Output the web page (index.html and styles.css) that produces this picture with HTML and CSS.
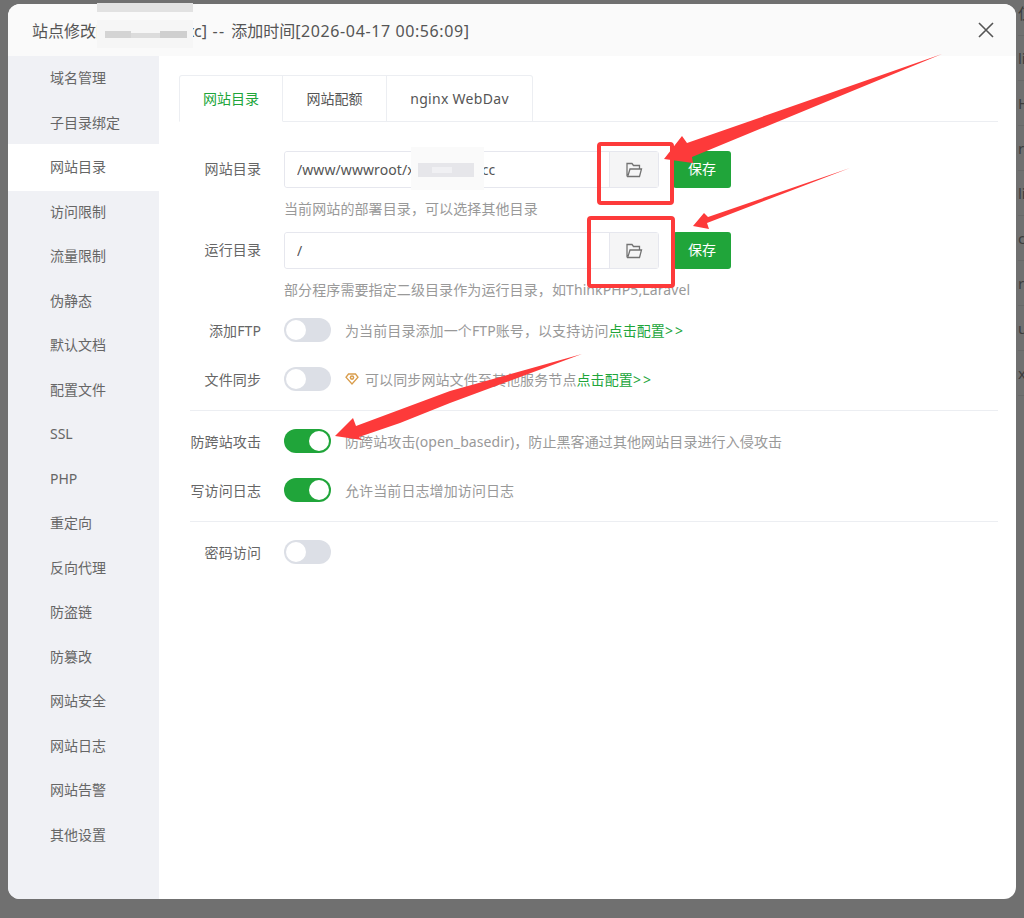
FILE: index.html
```html
<!DOCTYPE html>
<html lang="zh-CN">
<head>
  <meta charset="UTF-8">
  <title>站点修改</title>
  <link rel="stylesheet" href="styles.css">
</head>
<body>
  <!-- page behind the dialog, only a sliver shows on the right -->
  <div class="backdrop">
    <div class="backdrop-row">仅</div>
    <div class="backdrop-row">li</div>
    <div class="backdrop-row">H</div>
    <div class="backdrop-row">r</div>
    <div class="backdrop-row">li</div>
    <div class="backdrop-row">c</div>
    <div class="backdrop-row">r</div>
    <div class="backdrop-row">u</div>
    <div class="backdrop-row">x</div>
  </div>

  <div class="modal">
    <header class="modal-head">
      <span class="modal-title">站点修改[xxxxxxxxxxxc]<span class="title-sep"> -- </span>添加时间<span class="title-date">[2026-04-17 00:56:09]</span></span>
      <svg class="modal-close" width="16" height="16" viewBox="0 0 16 16"><path d="M1 1 15 15M15 1 1 15" stroke="#555" stroke-width="1.6" fill="none"/></svg>
    </header>
    <div class="modal-body">
      <nav class="side">
        <a class="side-item">域名管理</a>
        <a class="side-item">子目录绑定</a>
        <a class="side-item active">网站目录</a>
        <a class="side-item">访问限制</a>
        <a class="side-item">流量限制</a>
        <a class="side-item">伪静态</a>
        <a class="side-item">默认文档</a>
        <a class="side-item">配置文件</a>
        <a class="side-item">SSL</a>
        <a class="side-item">PHP</a>
        <a class="side-item">重定向</a>
        <a class="side-item">反向代理</a>
        <a class="side-item">防盗链</a>
        <a class="side-item">防篡改</a>
        <a class="side-item">网站安全</a>
        <a class="side-item">网站日志</a>
        <a class="side-item">网站告警</a>
        <a class="side-item">其他设置</a>
      </nav>
      <main class="content">
        <div class="tabs">
          <div class="tab tab-active">网站目录</div>
          <div class="tab tab-second">网站配额</div>
          <div class="tab tab-third">nginx WebDav</div>
        </div>

        <div class="form">
          <div class="path-row">
            <label class="row-label">网站目录</label>
            <div class="path-group">
              <input class="path-input" value="/www/wwwroot/xxxxxxxxxxcc">
              <button class="path-btn">
                <svg width="18" height="16" viewBox="0 0 18 16"><path d="M2 14.500V1.500h5l1.500 2h6V7M2 14.500h12.500l2-7.500H5L3 13.500" fill="none" stroke="#737373" stroke-width="1.300"/></svg>
              </button>
            </div>
            <button class="save-btn">保存</button>
          </div>
          <p class="help">当前网站的部署目录，可以选择其他目录</p>

          <div class="path-row">
            <label class="row-label">运行目录</label>
            <div class="path-group">
              <input class="path-input" value="/">
              <button class="path-btn">
                <svg width="18" height="16" viewBox="0 0 18 16"><path d="M2 14.500V1.500h5l1.500 2h6V7M2 14.500h12.500l2-7.500H5L3 13.500" fill="none" stroke="#737373" stroke-width="1.300"/></svg>
              </button>
            </div>
            <button class="save-btn">保存</button>
          </div>
          <p class="help">部分程序需要指定二级目录作为运行目录，如ThinkPHP5,Laravel</p>

          <div class="switch-row row-ftp">
            <label class="row-label">添加FTP</label>
            <span class="switch"></span>
            <span class="switch-text">为当前目录添加一个FTP账号，以支持访问<a class="link">点击配置<span class="chev">&gt;&gt;</span></a></span>
          </div>
          <div class="switch-row row-sync">
            <label class="row-label">文件同步</label>
            <span class="switch"></span>
            <svg class="gem" width="14" height="12" viewBox="0 0 14 12"><path d="M3.500 1h7L13 4.300 7 11 1 4.300z" fill="none" stroke="#d99d4c" stroke-width="1.300"/><circle cx="7" cy="4.600" r="2.300" fill="#d99d4c"/><circle cx="7" cy="4.600" r=".8" fill="#fff"/></svg>
            <span class="switch-text">可以同步网站文件至其他服务节点<a class="link">点击配置<span class="chev">&gt;&gt;</span></a></span>
          </div>
          <hr class="divider">
          <div class="switch-row row-cross">
            <label class="row-label">防跨站攻击</label>
            <span class="switch on"></span>
            <span class="switch-text">防跨站攻击(open_basedir)，防止黑客通过其他网站目录进行入侵攻击</span>
          </div>
          <div class="switch-row row-log">
            <label class="row-label">写访问日志</label>
            <span class="switch on"></span>
            <span class="switch-text">允许当前日志增加访问日志</span>
          </div>
          <hr class="divider divider-low">
          <div class="switch-row row-pass">
            <label class="row-label">密码访问</label>
            <span class="switch"></span>
          </div>
        </div>
      </main>
    </div>
  </div>

  <!-- screenshot markup: mosaics, red boxes and arrows drawn on top -->
  <svg class="marks" width="1024" height="918" viewBox="0 0 1024 918">
    <rect x="97" y="3" width="96" height="9" fill="#e2e2e2"/>
    <rect x="97" y="20" width="96" height="28" fill="#f6f6f6"/>
    <rect x="105" y="31" width="26" height="7" fill="#d4d4d4"/>
    <rect x="131" y="33" width="30" height="5" fill="#dcdcdc"/>
    <rect x="160" y="31" width="27" height="7" fill="#cfcfcf"/>
    <rect x="411" y="147" width="73" height="43" fill="#fafafa"/>
    <rect x="418" y="163" width="56" height="14" fill="#e6e6ea"/>
    <rect x="432" y="167" width="20" height="6" fill="#f0f0f3"/>
    <rect x="599" y="144" width="73" height="59" rx="2" fill="none" stroke="#fd3a3a" stroke-width="4"/>
    <rect x="589" y="218" width="84" height="68" rx="2" fill="none" stroke="#fd3a3a" stroke-width="4"/>
    <polygon points="942,54 687,143 682,136 664,159 693,163 692,157" fill="#fd3a3a"/>
    <polygon points="850,168 708,217 704,213 693,226 709,229 707,223" fill="#fd3a3a"/>
    <polygon points="582,354 450,391 356,426 353,418 335,436 362,440 359,437 400,423 450,403" fill="#fd3a3a"/>
  </svg>
</body>
</html>
```

FILE: styles.css
```css
* {
  box-sizing: border-box;
}
html, body {
  height: 100%;
}
body {
  margin: 0;
  height: 918px;
  overflow: hidden;
  position: relative;
  background-color: #707070;
  font-family: "Noto Sans", "Noto Sans CJK SC", sans-serif;
  font-size: 14px;
  color: #666;
}

/* page behind */
.backdrop {
  padding-left: 1018px;
  margin-top: -9px;
}
.backdrop-row {
  height: 45px;
  line-height: 45px;
  font-size: 15px;
  color: #3c3c3c;
  white-space: nowrap;
  overflow: hidden;
  border-bottom: 1px solid #686868;
}

/* dialog */
.modal {
  position: absolute;
  left: 8px;
  top: 4px;
  width: 1008px;
  height: 895px;
  background: #fff;
  border-radius: 12px;
  overflow: hidden;
  display: flex;
  flex-direction: column;
}
.modal-head {
  height: 52px;
  flex: none;
  background: #fafafa;
  display: flex;
  align-items: center;
  justify-content: space-between;
  padding: 0 22px 0 24px;
}
.modal-title {
  font-size: 16px;
  color: #555;
}
.title-sep {
  letter-spacing: 1.4px;
}
.title-date {
  letter-spacing: .6px;
}
.modal-body {
  flex: 1;
  display: flex;
  min-height: 0;
}

/* sidebar */
.side {
  width: 151px;
  flex: none;
  background: #f0f1f5;
}
.side-item {
  display: block;
  height: 44.5px;
  line-height: 44px;
  padding-left: 42px;
  color: #666;
}
.side-item.active {
  background: #fff;
  box-shadow: 0 -1px #fff, 0 1px #fff;
  position: relative;
}

/* main area */
.content {
  flex: 1;
  padding: 19px 18px 0 20px;
}
.tabs {
  display: flex;
  height: 47px;
  border-bottom: 1px solid #eceef2;
}
.tab {
  height: 47px;
  line-height: 45px;
  text-align: center;
  border: 1px solid #eceef2;
  border-left: none;
  color: #555;
}
.tab-active {
  width: 104px;
  color: #20a53a;
  border-left: 1px solid #eceef2;
  border-bottom-color: #fff;
  border-radius: 3px 0 0 0;
}
.tab-second {
  width: 104px;
}
.tab-third {
  width: 146px;
  border-radius: 0 3px 0 0;
  letter-spacing: .3px;
}

.form {
  padding: 29px 0 0 11px;
}
.row-label {
  width: 71px;
  flex: none;
  text-align: right;
  color: #666;
  margin-right: 23px;
  letter-spacing: .1px;
}
.path-row {
  display: flex;
  align-items: center;
  height: 37px;
}
.path-row .row-label {
  padding-bottom: 3px;
}
.path-group {
  width: 375px;
  height: 37px;
  display: flex;
  border: 1px solid #e6e7ee;
  border-radius: 3px;
}
.path-input {
  flex: 1;
  min-width: 0;
  border: none;
  outline: none;
  background: #fff;
  padding: 0 12px;
  font: inherit;
  letter-spacing: .08px;
  color: #555;
  border-radius: 3px;
}
.path-btn {
  width: 49px;
  flex: none;
  border: none;
  border-left: 1px solid #e6e7ee;
  background: #f5f5f6;
  padding: 0;
  display: flex;
  align-items: center;
  justify-content: center;
}
.save-btn {
  width: 58px;
  height: 37px;
  margin-left: 14px;
  padding: 0 0 3px;
  border: none;
  border-radius: 3px;
  background: #20a53a;
  color: #fff;
  font: inherit;
}
.help {
  margin: 11px 0 13px 94px;
  height: 20px;
  line-height: 20px;
  color: #999;
  letter-spacing: .1px;
}
.switch-row {
  display: flex;
  align-items: center;
  height: 24px;
}
.row-ftp {
  margin-top: 18px;
}
.row-sync {
  margin-top: 25px;
}
.row-cross {
  margin-top: 18px;
}
.row-log {
  margin-top: 25px;
}
.row-pass {
  margin-top: 18px;
}
.switch {
  width: 47px;
  height: 24px;
  flex: none;
  border-radius: 12px;
  background: #dcdfe6;
  position: relative;
  margin-right: 14px;
}
.switch::after {
  content: "";
  position: absolute;
  left: 2px;
  top: 2px;
  width: 20px;
  height: 20px;
  border-radius: 50%;
  background: #fff;
}
.switch.on {
  background: #20a53a;
}
.switch.on::after {
  left: 25px;
}
.switch-text {
  color: #999;
  white-space: nowrap;
  letter-spacing: .1px;
}
.gem {
  margin-right: 6px;
  flex: none;
}
.link {
  color: #20a53a;
}
.chev {
  letter-spacing: 2px;
}
.divider {
  border: none;
  border-top: 1px solid #eceef2;
  margin: 19px 0 0;
}
.divider-low {
  margin-top: 19px;
}

.marks {
  position: absolute;
  left: 0;
  top: 0;
  pointer-events: none;
}
```
